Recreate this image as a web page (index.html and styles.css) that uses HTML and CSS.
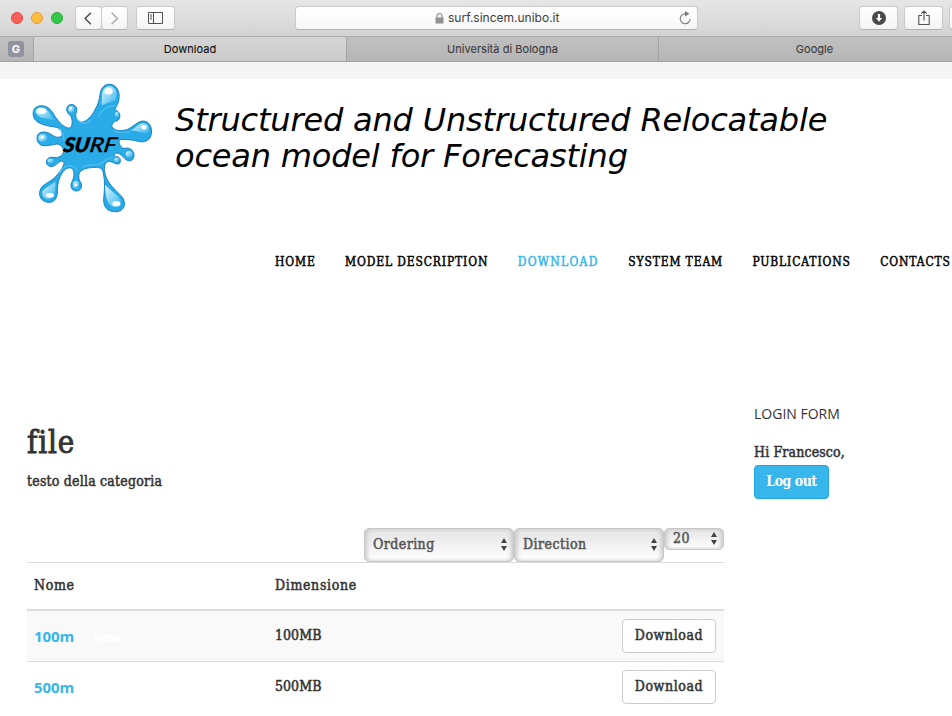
FILE: index.html
```html
<!DOCTYPE html>
<html lang="it">
<head>
<meta charset="utf-8">
<title>Download</title>
<link rel="stylesheet" href="styles.css">
</head>
<body>
<div class="toolbar">
  <div class="lights"><i class="red"></i><i class="yellow"></i><i class="green"></i></div>
  <div class="history">
    <span class="btn nav"><svg width="26" height="23" viewBox="0 0 26 23"><path d="M15.500 5.500L9.500 11.500l6 6" fill="none" stroke="#4c4c4c" stroke-width="1.500"/></svg></span>
    <span class="btn nav"><svg width="26" height="23" viewBox="0 0 26 23"><path d="M10 5.500l6 6-6 6" fill="none" stroke="#aaa" stroke-width="1.500"/></svg></span>
  </div>
  <span class="btn side"><svg width="16" height="13" viewBox="0 0 16 13"><path d="M.5.5h14v11H.5zM5.5.5v11M2 3h2M2 5h2M2 7h2" fill="none" stroke="#505050"/></svg></span>
  <div class="address">
    <svg class="lock" width="9" height="11" viewBox="0 0 9 11"><path d="M2 5V3a2.5 2.5 0 0 1 5 0v2" fill="none" stroke="#929292" stroke-width="1.2"/><rect x=".5" y="4.6" width="8" height="6" rx=".6" fill="#929292"/></svg>
    <span class="url">surf.sincem.unibo.it</span>
    <svg class="reload" width="13" height="15" viewBox="0 0 13 15"><path d="M7 2.8A5 5 0 1 0 11.2 8" fill="none" stroke="#777" stroke-width="1.1"/><path d="M6 0l4.5 2.8L6 5.5z" fill="#777"/></svg>
  </div>
  <span class="btn down"><svg width="14" height="14" viewBox="0 0 14 14"><circle cx="7" cy="7" r="7" fill="#494949"/><path d="M5.900 3h2.200v4h2L7 10.800 3.900 7h2z" fill="#fff"/></svg></span>
  <span class="btn share"><svg width="12" height="16" viewBox="0 0 12 16"><path d="M4 5.500H.8v9h10.400v-9H8M6 10.500V1.200M3.300 3.700L6 1l2.700 2.700" fill="none" stroke="#505050" stroke-width="1.100"/></svg></span>
  <span class="btn edge"></span>
</div>
<div class="tabs">
  <div class="pin"><b>G</b></div>
  <div class="tab active">Download</div>
  <div class="tab">Università di Bologna</div>
  <div class="tab">Google</div>
</div>
<header class="banner">
  <svg class="logo" width="140" height="140" viewBox="0 0 420 420">
    <defs><linearGradient id="drop" x1="0" y1="0" x2="1" y2="1"><stop offset="0" stop-color="#e0f6ff"/><stop offset=".5" stop-color="#8bd6f6"/><stop offset="1" stop-color="#32b4ec"/></linearGradient></defs>
    <path fill="#28abe6" stroke="#1484c4" stroke-width="3" d="M240 50C243 25 258 17 272 19C292 22 300 45 297 62C295 80 285 88 285 97C300 98 304 118 294 127C282 130 276 135 275 145C285 160 300 160 320 155C340 148 350 130 370 129C392 130 398 155 393 172C388 190 370 194 355 190C340 186 320 183 298 185C295 195 300 206 312 212C325 206 342 215 342 232C342 248 328 252 318 245C308 236 300 222 285 226C280 233 285 238 292 236C303 238 304 256 295 258C285 259 278 250 265 250C250 255 252 275 256 290C262 315 285 335 305 355C320 375 315 398 290 401C265 403 250 388 251 365C253 340 256 310 250 285C247 272 242 270 232 268C210 268 195 270 183 278C172 290 176 305 183 315C188 330 180 339 168 339C155 338 150 325 155 313C162 300 165 285 158 273C150 266 138 270 130 280C115 300 112 320 112 345C110 365 100 374 85 373C65 371 55 355 60 338C65 320 85 315 103 300C118 285 128 272 133 255C128 245 118 250 110 258C100 268 85 268 80 257C76 243 88 236 100 238C112 240 122 238 130 225C132 210 125 200 110 198C95 200 80 206 65 202C50 196 48 178 55 168C65 158 85 162 95 170C105 178 115 180 125 175C130 160 120 150 105 147C85 144 55 140 43 122C34 100 42 84 65 83C90 84 98 105 110 122C122 140 140 152 150 150C160 140 157 125 152 113C138 105 135 85 150 80C165 77 175 90 168 105C165 120 172 130 185 133C200 130 215 115 225 95C235 78 238 65 240 50Z"/>
    <g fill="url(#drop)">
      <path d="M246 53C246 30 260 23 273 25C289 29 294 50 287 66C275 72 260 74 246 82C243 73 246 66 246 53Z"/>
      <path d="M47 104C46 92 56 87 68 89C86 94 93 112 105 128C90 120 60 126 47 104Z"/>
      <path d="M331 158C348 151 354 136 370 136C386 138 390 151 386 162C376 173 355 156 331 158Z"/>
      <path d="M255 320C268 335 290 347 302 365C309 384 292 392 278 386C258 376 256 345 255 320Z"/>
      <path d="M106 309C106 330 108 350 95 361C80 370 65 356 67 341C75 327 94 324 106 309Z"/>
      <ellipse cx="154" cy="94" rx="9" ry="10"/><ellipse cx="68" cy="180" rx="13" ry="11"/>
      <ellipse cx="327" cy="228" rx="10" ry="9"/><ellipse cx="168" cy="320" rx="9" ry="11"/>
      <ellipse cx="92" cy="248" rx="9" ry="6"/><ellipse cx="290" cy="245" rx="8" ry="6"/><ellipse cx="291" cy="109" rx="6" ry="8"/>
    </g>
    <path fill="none" stroke="#4dbdf0" stroke-width="4" stroke-linecap="round" d="M285 84C270 82 248 92 237 112M170 122C179 140 201 139 212 126M132 187C129 170 130 159 119 151M281 157C295 167 312 163 328 162M118 285C134 260 153 257 169 273M187 269C207 253 231 266 244 256C257 249 263 238 278 238"/>
    <g fill="#fff"><ellipse cx="266" cy="40" rx="12" ry="10"/><ellipse cx="66" cy="99" rx="13" ry="9"/><ellipse cx="372" cy="148" rx="8" ry="7"/><ellipse cx="90" cy="352" rx="12" ry="7"/><ellipse cx="289" cy="377" rx="12" ry="8"/><circle cx="152" cy="91" r="4"/><circle cx="67" cy="178" r="5"/><circle cx="168" cy="321" r="4"/></g>
    <g transform="translate(0 221) skewX(-9)">
      <text class="mark heavy" x="128" y="0" textLength="78" lengthAdjust="spacingAndGlyphs">SU</text>
      <text class="mark" x="207" y="0" textLength="80" lengthAdjust="spacingAndGlyphs">RF</text>
    </g>
  </svg>
  <h1>Structured and Unstructured Relocatable<br>ocean model for Forecasting</h1>
</header>
<nav class="menu">
  <a>HOME</a><a>MODEL DESCRIPTION</a><a class="current">DOWNLOAD</a><a>SYSTEM TEAM</a><a>PUBLICATIONS</a><a>CONTACTS</a>
</nav>
<div class="page">
  <main>
    <h2>file</h2>
    <p class="desc">testo della categoria</p>
    <div class="filters">
      <div class="select"><span>Ordering</span><i class="arrows"></i></div>
      <div class="select"><span>Direction</span><i class="arrows"></i></div>
      <div class="select small"><span>20</span><i class="arrows"></i></div>
    </div>
    <div class="row head"><span>Nome</span><span>Dimensione</span></div>
    <div class="row odd"><span class="name"><a>100m</a><em>New</em></span><span>100MB</span><button>Download</button></div>
    <div class="row"><span class="name"><a>500m</a></span><span>500MB</span><button>Download</button></div>
  </main>
  <aside>
    <h3>LOGIN FORM</h3>
    <p class="hi">Hi Francesco,</p>
    <button class="logout">Log out</button>
  </aside>
</div>
</body>
</html>
```
FILE: styles.css
```css
* { box-sizing: border-box; }
body { margin: 0; width: 952px; height: 716px; overflow: hidden; background: #fff; color: #333; font: 14px/20px "DejaVu Serif Condensed", "DejaVu Serif", serif; font-stretch: condensed; }
h1, h2, h3, p { margin: 0; font-weight: 400; }
svg { display: block; }

.toolbar { display: flex; height: 37px; padding-top: 6px; background: linear-gradient(#e6e6e6, #d3d3d3); border-bottom: 1px solid #acacac; overflow: hidden; }
.lights { display: flex; flex: none; gap: 8px; width: 65px; padding: 6px 0 0 11px; }
.lights i { width: 12px; height: 12px; border-radius: 50%; }
.red { background: #fc605b; border: 1px solid #e24640; }
.yellow { background: #fdbc40; border: 1px solid #dfa033; }
.green { background: #34c84a; border: 1px solid #27aa35; }
.btn { display: flex; flex: none; align-items: center; justify-content: center; height: 24px; border: 1px solid #cacaca; border-bottom-color: #b0b0b0; border-radius: 4px; background: linear-gradient(#fff, #f4f4f4); }
.history { display: flex; flex: none; margin-left: 10px; width: 53px; }
.nav { width: 27px; }
.nav + .nav { margin-left: -1px; }
.side { width: 39px; margin-left: 8px; }
.address { display: flex; align-items: center; flex: none; width: 403px; height: 24px; margin-left: 120px; padding-left: 138px; border: 1px solid #cacaca; border-bottom-color: #b0b0b0; border-radius: 4px; background: linear-gradient(#fff, #f7f7f7); }
.lock { margin-left: 1px; }
.url { width: 121px; margin-left: 4px; color: #404040; font: 12px/20px Inter, sans-serif; }
.reload { margin-left: 110px; }
.down { width: 39px; margin-left: 161px; }
.share { width: 39px; margin-left: 6px; }
.edge { width: 39px; margin-left: 6px; }

.tabs { display: flex; height: 25px; background: linear-gradient(#c0c0c0, #b6b6b6); border-bottom: 1px solid #a2a2a2; font: 400 11px/25px Inter, sans-serif; letter-spacing: .04px; color: #3c3c3c; }
.pin { flex: none; width: 33px; padding: 4px 0 0 8px; }
.pin b { display: block; width: 16px; height: 16px; border-radius: 3px; background: #9192a0; color: #fff; text-align: center; font-size: 11px; line-height: 16px; }
.tab { flex: none; width: 312px; border-left: 1px solid #a5a5a5; text-align: center; -webkit-text-stroke: .1px; }
.tab.active { width: 313px; background: linear-gradient(#d5d5d5, #cbcbcb); color: #111; }

.banner { display: flex; height: 163px; border-top: 17px solid #f4f4f4; }
.logo { flex: none; margin: -1px 0 0 20px; }
.mark { font: italic 61px Lato, sans-serif; fill: #000; stroke: #000; stroke-width: 1.5px; }
.mark.heavy { font-weight: 900; }
.banner h1 { margin: 23px 0 0 15px; color: #000; font: italic 32px/36px "DejaVu Sans", sans-serif; letter-spacing: -.18px; white-space: nowrap; }

.menu { display: flex; gap: 29.5px; height: 40px; margin: 17px 0 0 275px; color: #000; font-size: 12px; line-height: 40px; letter-spacing: .85px; -webkit-text-stroke: .45px; white-space: nowrap; }
.menu .current { color: #36b6ea; letter-spacing: 1.3px; }

.page { display: flex; padding-left: 27px; }
main { width: 697px; }
h2 { margin-top: 138px; font-size: 31px; line-height: 44px; letter-spacing: .9px; -webkit-text-stroke: .9px; }
.desc { margin-top: 7px; letter-spacing: .2px; }
.filters { display: flex; justify-content: flex-end; height: 34px; margin-top: 37px; }
.select { display: flex; justify-content: space-between; align-items: center; width: 150px; height: 34px; padding: 0 6px 1px 8px; border: 1px solid #c7c7c7; border-radius: 5px; background: linear-gradient(#e4e4e4, #fff); box-shadow: inset 3px 0 4px -1px #c8c8c8, inset -3px 0 4px -1px #c8c8c8; color: #555; letter-spacing: .45px; }
.select span { padding-bottom: 2px; }
.small { width: 60px; height: 22px; }
.arrows { display: grid; gap: 3px; }
.arrows::before, .arrows::after { content: ""; border: 3px solid transparent; }
.arrows::before { border-top: 0; border-bottom: 5px solid #444; }
.arrows::after { border-bottom: 0; border-top: 5px solid #444; }
.row { display: grid; grid-template-columns: 240px 1fr 94px; align-items: center; height: 51px; padding: 0 8px; border-top: 1px solid #ddd; letter-spacing: .05px; }
.row > span { padding-bottom: 2px; }
.row > .name { padding: 1px 0 0; margin-left: -1px; }
.head { height: 47px; letter-spacing: .65px; }
.head span:first-child { margin-left: -1px; }
.odd { height: 52px; border-top-width: 2px; background: #f9f9f9; }
.row a { color: #36b6ea; font: 700 15px/20px "Open Sans", sans-serif; letter-spacing: -.1px; }
.row em { margin-left: 19px; color: #fff; font: 800 12px/20px "Open Sans", sans-serif; letter-spacing: 0; }
button { height: 34px; padding: 0 0 2px; border: 1px solid #ccc; border-radius: 4px; background: #fff; color: #333; font: inherit; letter-spacing: .6px; -webkit-text-stroke: .5px; }
aside { margin: 122px 0 0 30px; }
h3 { font: 14px/20px "Open Sans", sans-serif; }
.hi { margin-top: 18px; letter-spacing: .15px; }
.logout { width: 75px; margin-top: 3px; border-color: #25a5dc; background: #36b6ea; color: #fff; font-weight: 700; letter-spacing: -.5px; -webkit-text-stroke: 0; }
.desc, .hi, .row, .select { -webkit-text-stroke: .5px; }
.row a, .row em { -webkit-text-stroke: 0; }
```
